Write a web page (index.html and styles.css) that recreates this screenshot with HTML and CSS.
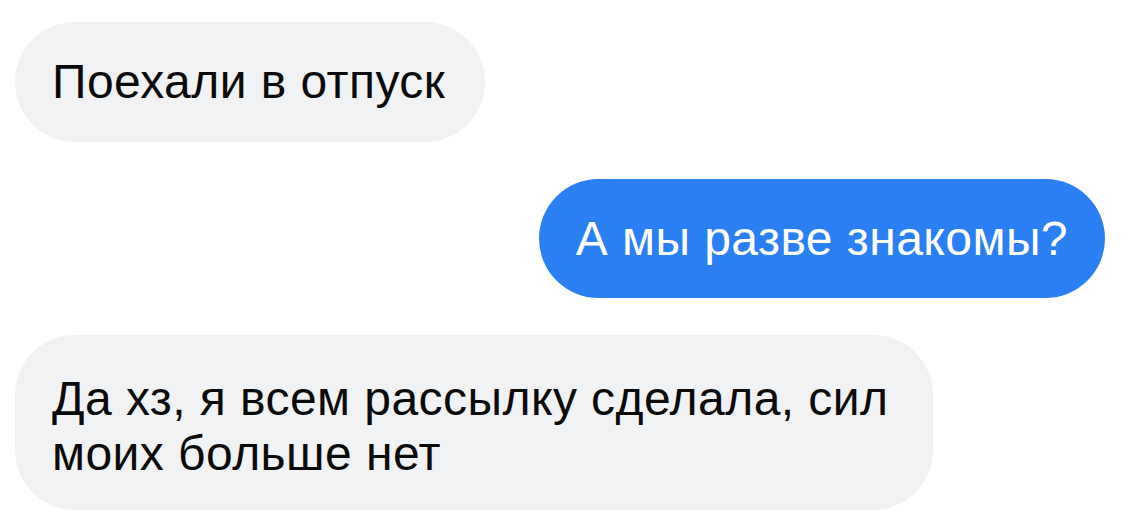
FILE: index.html
```html
<!DOCTYPE html>
<html lang="ru">
<head>
<meta charset="utf-8">
<title>Чат</title>
<link rel="stylesheet" href="styles.css">
</head>
<body>
<main class="chat">
  <div class="bubble in first">Поехали в отпуск</div>
  <div class="bubble out">А мы разве знакомы?</div>
  <div class="bubble in wide">Да хз, я всем рассылку сделала, сил моих больше нет</div>
</main>
</body>
</html>
```

FILE: styles.css
```css
html, body {
  margin: 0;
  padding: 0;
  background: #ffffff;
}

body {
  width: 1130px;
  height: 524px;
  overflow: hidden;
}

.chat {
  display: flex;
  flex-direction: column;
  gap: 37px;
  padding: 22px 25px 0 15px;
  font-family: "Liberation Sans", Arial, sans-serif;
  font-size: 48px;
  line-height: 55px;
  letter-spacing: 0.45px;
}

.bubble {
  box-sizing: border-box;
  border-radius: 60px;
  padding: 32px 40px 33px 37px;
}

.in {
  align-self: flex-start;
  background: #f1f2f4;
  color: #0b0b0b;
}

.out {
  align-self: flex-end;
  background: #2a80f3;
  color: #ffffff;
  padding: 32px 37px;
}

.wide {
  max-width: 918px;
  padding: 36px 37px 29px 37px;
}
```
